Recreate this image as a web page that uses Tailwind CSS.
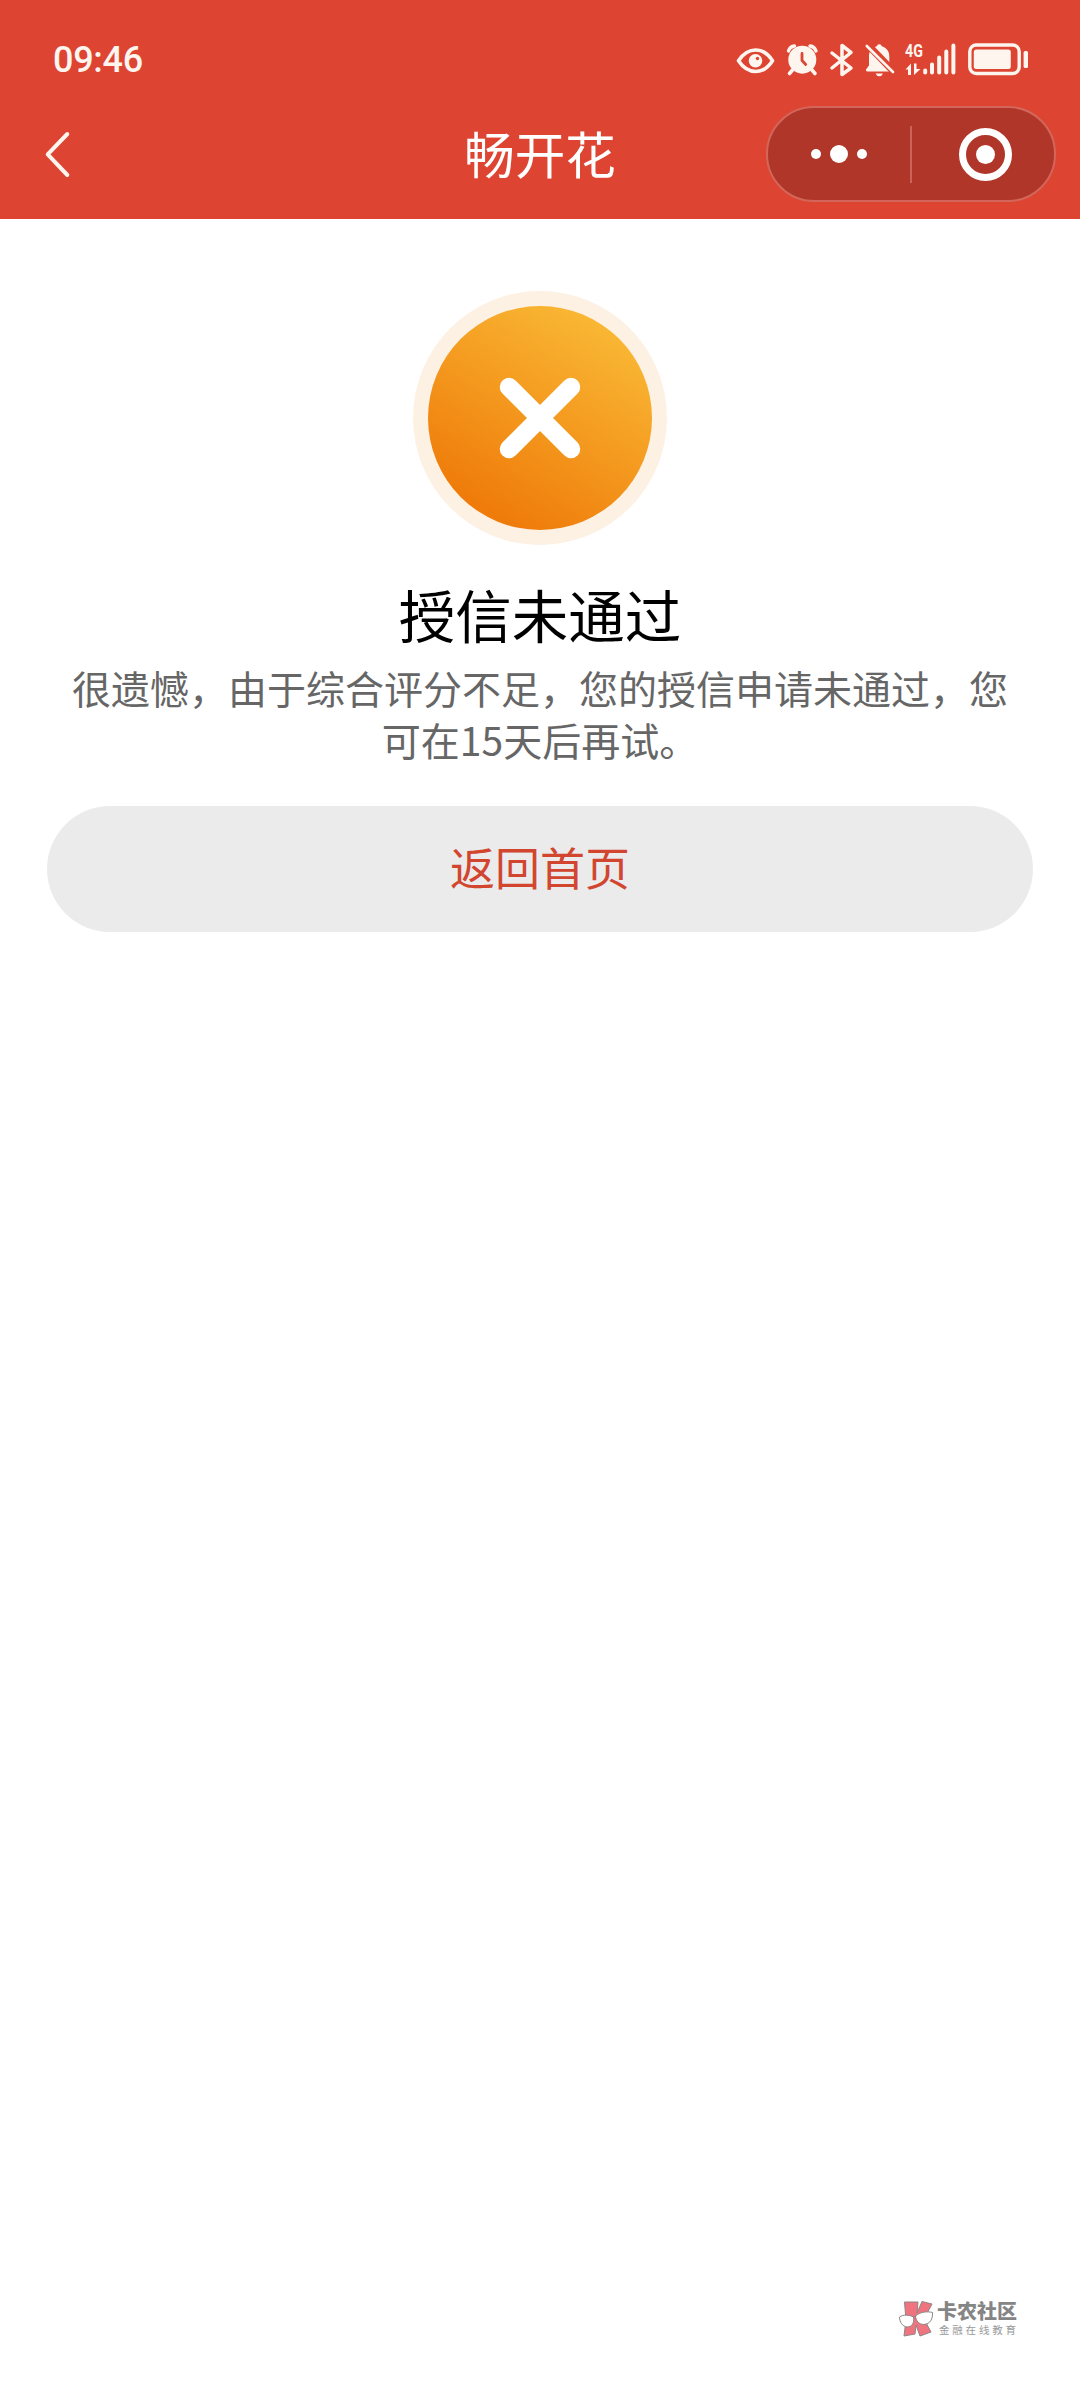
<!DOCTYPE html>
<html lang="zh-CN">
<head>
<meta charset="utf-8">
<title>畅开花</title>
<script src="https://cdn.jsdelivr.net/npm/@tailwindcss/browser@4"></script>
</head>
<body class="bg-white">
<div class="flex h-[2388px] w-[1080px] flex-col overflow-hidden bg-white font-['Noto_Sans_CJK_SC',sans-serif]">
  <header class="h-[219px] shrink-0 bg-[#dd4432] text-[#fff5ef]">
    <!-- status bar -->
    <div class="flex h-[100px] items-center justify-between pt-5 pr-[50px] pl-[53px]">
      <span class="font-[Roboto,sans-serif] text-[36px] leading-10 font-medium tracking-[-.3px]">09:46</span>
      <div class="flex h-10">
        <svg class="h-10 w-[48px]" viewBox="734 40 48 40" fill="none"><path d="M738.5 60.7C748 46.500 763.500 46.500 772.500 60.700C763.500 75 748 75 738.500 60.700Z" stroke="currentColor" stroke-width="3.6" stroke-linejoin="round"/><circle cx="755.500" cy="60.700" r="6.800" fill="currentColor"/><circle cx="757.500" cy="58.500" r="1.700" fill="#dd4432"/></svg>
        <svg class="h-10 w-[44px]" viewBox="782 40 44 40" fill="none" stroke="currentColor" stroke-linecap="round"><circle cx="802.300" cy="59.700" r="14" fill="currentColor" stroke="none"/><path d="M788.500 51Q790 46.500 794.500 46M816 51Q814.500 46.500 810 46" stroke-width="3.400"/><path d="M792.500 70L789.500 73.500M812 70L815 73.500" stroke-width="3.600"/><path d="M802 53.500V60.500L805.700 64.500" stroke="#dd4432" stroke-width="2.800"/></svg>
        <svg class="h-10 w-[36px]" viewBox="826 40 36 40" fill="none"><path d="M832 53L851 68L842 74.500V45.500L851 52.500L832 68" stroke="currentColor" stroke-width="3.500" stroke-linejoin="round" stroke-linecap="round"/></svg>
        <svg class="h-10 w-[40px]" viewBox="862 40 40 40" fill="currentColor"><path d="M876 46.500Q877.500 46.500 877.500 44.800Q879.300 43.600 881 44.800Q881.200 46.300 883 46.700C887.500 48.500 889.300 52 889.300 56.500V63L891.500 69.500L893 71.500H867.500Q865.500 71.500 866 69.500L869 65.500V56.500C869 51 871.500 48 876 46.500Z"/><path d="M875.500 73.500H883Q882 76.200 879.300 76.200Q876.600 76.200 875.500 73.500Z"/><path d="M867 44L895 73" stroke="#dd4432" stroke-width="7"/><path d="M866.800 46L893 72" stroke="currentColor" stroke-width="2.600" stroke-linecap="round"/></svg>
        <div class="flex w-[20px] flex-col pl-[3px]">
          <span class="block h-[21px] w-[24px] origin-left scale-x-75 font-[Roboto,sans-serif] text-[19px] leading-[21px] font-bold">4G</span>
          <svg class="mt-[2px] h-[14px] w-[16px]" viewBox="905 63 16 14" fill="currentColor"><path d="M905.500 69.500L911 63.500V75H908V69.500ZM914 63.500H916.500V69H920.500L914 75Z"/></svg>
        </div>
        <svg class="h-10 w-[40px]" viewBox="922 40 40 40" stroke="currentColor" stroke-width="4" stroke-linecap="round"><path d="M925.200 70.500V72.500M932 64.500V72.500M939.200 57.500V72.500M946.300 51.500V72.500M953.400 45.500V72.500"/></svg>
        <svg class="h-10 w-[68px]" viewBox="962 40 68 40" fill="currentColor"><rect x="969.800" y="45" width="49.400" height="28.500" rx="6.500" fill="none" stroke="currentColor" stroke-width="3.400"/><rect x="973.800" y="49.500" width="37" height="19.500" rx="2.500"/><rect x="1023.600" y="51" width="4.400" height="17" rx="1.500"/></svg>
      </div>
    </div>
    <!-- navigation bar -->
    <div class="grid h-[108px] grid-cols-3 items-center">
      <svg class="ml-[40px] h-[52px] w-[36px]" viewBox="40 128 36 52" fill="none"><path d="M67.300 134L47.700 154.300L67.300 175" stroke="currentColor" stroke-width="4" stroke-linecap="round" stroke-linejoin="round"/></svg>
      <h1 class="pb-[5px] text-center text-[50.5px] leading-[60px] text-white">畅开花</h1>
      <div class="mr-6 flex h-24 w-[290px] items-center justify-self-end rounded-full border-2 border-[#d3665a] bg-[#b03629]">
        <div class="flex w-[142px] items-center justify-center gap-[9px]">
          <span class="size-[10px] rounded-full bg-white"></span><span class="size-[18px] rounded-full bg-white"></span><span class="size-[10px] rounded-full bg-white"></span>
        </div>
        <span class="h-[57px] w-[2px] bg-[#cb6358]"></span>
        <div class="flex flex-1 justify-center pl-[5px]">
          <span class="flex size-[53px] items-center justify-center rounded-full border-[7px] border-white"><span class="size-[19px] rounded-full bg-white"></span></span>
        </div>
      </div>
    </div>
  </header>

  <main class="flex flex-col items-center px-[47px] pt-[72px]">
    <svg class="size-[254px]" viewBox="0 0 254 254">
      <defs><linearGradient id="g" x1=".25" y1=".9" x2=".75" y2=".06"><stop offset="0" stop-color="#ef7c0a"/><stop offset="1" stop-color="#f9b734"/></linearGradient></defs>
      <circle cx="127" cy="127" r="127" fill="#fdf1e4"/>
      <circle cx="127" cy="127" r="112" fill="url(#g)"/>
      <path d="M96 96L158 158M158 96L96 158" stroke="#fff" stroke-width="18.500" stroke-linecap="round"/>
    </svg>
    <h2 class="mt-[30px] text-[56.5px] leading-[76px] text-black">授信未通过</h2>
    <p class="mt-[10px] w-[940px] text-center text-[39px] leading-[52px] text-[#666]">很遗憾，由于综合评分不足，您的授信申请未通过，您<br>可在15天后再试。</p>
    <button class="mt-[41px] h-[126px] w-full rounded-full bg-[#ebebeb] pb-[4px] text-[45px] leading-[60px] text-[#d2452f]">返回首页</button>
  </main>

  <footer class="mt-auto mr-[61px] mb-[50px] flex items-center gap-[3px] self-end">
    <svg class="h-[38px] w-[36px]" viewBox="0 0 36 38" stroke="#8d8585" stroke-width="1"><path d="M6.500 2H20L19 13L24 1.500L34 4L26 19L33 32L22 36L18 25L17 34L6 36L8 20Z" fill="#f0747f"/><path d="M1.500 17C5 14.500 11 14.500 15.500 17C16.500 23 14 27 9 27C4.500 26.500 1.500 22 1.500 17ZM17.500 16C22 12 29 11 34.500 12.500C35 19 32 24 26 24.500C21 24.500 18 21 17.500 16ZM15.500 17L17.500 16" fill="#fff"/></svg>
    <div class="flex w-[82px] flex-col pb-[1px]">
      <span class="text-[20px] leading-[20px] font-black text-[#858585]">卡农社区</span>
      <span class="mt-[2px] pl-[2px] text-[10.500px] leading-[13px] tracking-[2.8px] whitespace-nowrap text-[#999]">金融在线教育</span>
    </div>
  </footer>
</div>
</body>
</html>
